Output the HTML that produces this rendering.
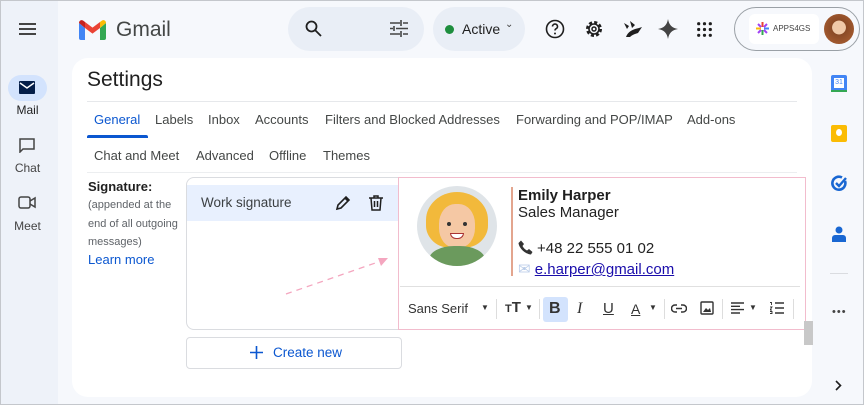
<!DOCTYPE html>
<html><head><meta charset="utf-8"><style>
*{box-sizing:border-box;margin:0;padding:0}
body{width:864px;height:405px;overflow:hidden;background:#f6f8fc;font-family:"Liberation Sans",Arial,sans-serif;color:#1f1f1f;position:relative}
.frame{position:absolute;inset:0;border:1px solid #c4c7cc;pointer-events:none;z-index:9}
.rail{position:absolute;left:0;top:0;width:58px;height:405px;background:#eef2f9}
.abs{position:absolute}
.tab{position:absolute;top:112px;font-size:13px;color:#444746;white-space:nowrap}
.tab2{position:absolute;top:148px;font-size:13px;color:#444746;white-space:nowrap}
.card{position:absolute;left:72px;top:58px;width:740px;height:339px;background:#fff;border-radius:16px}
</style></head><body>
<div class="rail"></div>
<div class="abs" style="left:19px;top:23px;width:17px;height:2px;background:#444;box-shadow:0 5px 0 #444,0 10px 0 #444"></div>
<div class="abs" style="left:8px;top:75px;width:39px;height:26px;border-radius:13px;background:#d3e3fd"></div>
<svg class="abs" style="left:19px;top:81px" width="16" height="13" viewBox="0 0 16 13"><rect width="16" height="13" rx="1" fill="#041e49"/><path d="M1 2l7 5 7-5" stroke="#fff" stroke-width="1.5" fill="none"/></svg>
<div class="abs" style="left:0;width:55px;top:103px;font-size:12px;text-align:center;color:#1f1f1f">Mail</div>
<svg class="abs" style="left:19px;top:138px" width="16" height="15" viewBox="0 0 16 15"><path d="M1 1h14v10H4l-3 3z" stroke="#444" stroke-width="1.5" fill="none"/></svg>
<div class="abs" style="left:0;width:55px;top:161px;font-size:12px;text-align:center;color:#444">Chat</div>
<svg class="abs" style="left:18px;top:196px" width="18" height="13" viewBox="0 0 18 13"><rect x="1" y="1" width="11" height="11" rx="2" stroke="#444" stroke-width="1.5" fill="none"/><path d="M12 5l5-3v9l-5-3" stroke="#444" stroke-width="1.5" fill="none"/></svg>
<div class="abs" style="left:0;width:55px;top:219px;font-size:12px;text-align:center;color:#444">Meet</div>

<svg class="abs" style="left:79px;top:20px" width="27" height="20" viewBox="0 0 27 20"><path d="M0 3v15a2 2 0 0 0 2 2h4V8z" fill="#4285f4"/><path d="M27 3v15a2 2 0 0 1-2 2h-4V8z" fill="#34a853"/><path d="M21 8v-6l2-1.5c1.5-1 4 0 4 2.5z" fill="#fbbc04"/><path d="M6 8V2l7.5 5.6L21 2v6l-7.5 5.6z" fill="#ea4335"/><path d="M0 3c0-2.5 2.5-3.5 4-2.5L6 2v6z" fill="#c5221f"/></svg>
<div class="abs" style="left:116px;top:18px;font-size:21px;color:#444746">Gmail</div>

<div class="abs" style="left:288px;top:7px;width:136px;height:44px;border-radius:22px;background:#e9eef6"></div>
<svg class="abs" style="left:305px;top:20px" width="17" height="17" viewBox="0 0 17 17"><circle cx="6.5" cy="6.5" r="5" stroke="#1f1f1f" stroke-width="1.8" fill="none"/><path d="M10 10l6 6" stroke="#1f1f1f" stroke-width="1.8"/></svg>
<svg class="abs" style="left:390px;top:20px" width="18" height="17" viewBox="0 0 18 17" stroke="#444" stroke-width="1.6"><path d="M0 3h10M13 3h5M11 0v6M0 8.5h3M6 8.5h12M4 6v5M0 14h10M13 14h5M11 11v6"/></svg>

<div class="abs" style="left:433px;top:7px;width:92px;height:44px;border-radius:22px;background:#e9eef6"></div>
<div class="abs" style="left:445px;top:25px;width:9px;height:9px;border-radius:50%;background:#1e8e3e"></div>
<div class="abs" style="left:462px;top:21px;font-size:14px;color:#1f1f1f">Active</div>
<div class="abs" style="left:505px;top:19px;font-size:10px;color:#444">⌄</div>

<svg class="abs" style="left:545px;top:19px" width="20" height="20" viewBox="0 0 20 20"><circle cx="10" cy="10" r="8.5" stroke="#1f1f1f" stroke-width="1.6" fill="none"/><path d="M7.5 7.5a2.5 2.5 0 1 1 3.5 2.3c-.8.4-1 .9-1 1.7" stroke="#1f1f1f" stroke-width="1.6" fill="none"/><circle cx="10" cy="14.5" r="1" fill="#1f1f1f"/></svg>
<svg class="abs" style="left:584px;top:19px" width="20" height="20" viewBox="0 0 20 20"><circle cx="10" cy="10" r="6.5" stroke="#1f1f1f" stroke-width="3" stroke-dasharray="3 2.1" fill="none"/><circle cx="10" cy="10" r="5" stroke="#1f1f1f" stroke-width="1.6" fill="none"/><circle cx="10" cy="10" r="2" stroke="#1f1f1f" stroke-width="1.5" fill="none"/></svg>
<svg class="abs" style="left:623px;top:20px" width="20" height="18" viewBox="0 0 20 18"><path d="M1 3l5 3-2 3zM7 1l5 4-3 3zM3 17c2-6 8-8 13-9l3-1-4 6c-3 1-6 2-8 4z" fill="#1f1f1f"/></svg>
<svg class="abs" style="left:658px;top:19px" width="20" height="20" viewBox="0 0 20 20"><path d="M10 0C11 6 14 9 20 10 14 11 11 14 10 20 9 14 6 11 0 10 6 9 9 6 10 0z" fill="#444"/></svg>
<svg class="abs" style="left:697px;top:22px" width="15" height="15" viewBox="0 0 15 15" fill="#1f1f1f"><circle cx="1.7" cy="1.7" r="1.6"/><circle cx="7.5" cy="1.7" r="1.6"/><circle cx="13.3" cy="1.7" r="1.6"/><circle cx="1.7" cy="7.5" r="1.6"/><circle cx="7.5" cy="7.5" r="1.6"/><circle cx="13.3" cy="7.5" r="1.6"/><circle cx="1.7" cy="13.3" r="1.6"/><circle cx="7.5" cy="13.3" r="1.6"/><circle cx="13.3" cy="13.3" r="1.6"/></svg>

<div class="abs" style="left:734px;top:7px;width:126px;height:44px;border-radius:22px;border:1px solid #9aa0a6;background:#f6f8fc"></div>
<div class="abs" style="left:749px;top:14px;width:70px;height:30px;border-radius:6px;background:#fff"></div>
<svg class="abs" style="left:756px;top:22px" width="13" height="13" viewBox="0 0 13 13" stroke-width="2"><path d="M6.5 0v5" stroke="#ea4335"/><path d="M13 6.5H8" stroke="#4285f4"/><path d="M6.5 13V8" stroke="#34a853"/><path d="M0 6.5h5" stroke="#fbbc04"/><path d="M2 2l3 3M11 2L8 5M11 11L8 8M2 11l3-3" stroke="#a142f4"/></svg>
<div class="abs" style="left:773px;top:24px;font-size:8px;color:#444">APPS4GS</div>
<div class="abs" style="left:824px;top:14px;width:30px;height:30px;border-radius:50%;background:radial-gradient(circle at 50% 45%,#f0c9a8 0 30%,#8a4a26 32%,#a0582e 70%,#5c2e16)"></div>

<div class="abs" style="left:831px;top:75px;width:16px;height:17px;border-radius:2px;background:#4285f4"></div>
<div class="abs" style="left:834px;top:78px;width:10px;height:10px;background:#fff;font-size:7px;color:#4285f4;text-align:center;line-height:10px">31</div>
<div class="abs" style="left:831px;top:90px;width:16px;height:2px;background:#34a853"></div>
<div class="abs" style="left:831px;top:125px;width:16px;height:17px;border-radius:2px;background:#fbbc04"></div>
<div class="abs" style="left:836px;top:129px;width:6px;height:7px;border-radius:50%;background:#fff"></div>
<svg class="abs" style="left:831px;top:175px" width="17" height="17" viewBox="0 0 17 17"><path d="M14 6A6.5 6.5 0 1 1 11 2.5" stroke="#1967d2" stroke-width="2.6" fill="none"/><path d="M5 8l3 3 7-8" stroke="#1967d2" stroke-width="2.4" fill="none"/></svg>
<svg class="abs" style="left:832px;top:226px" width="14" height="16" viewBox="0 0 14 16" fill="#1967d2"><circle cx="7" cy="4" r="3.5"/><path d="M0 16v-4a3 3 0 0 1 3-3h8a3 3 0 0 1 3 3v4z"/></svg>
<div class="abs" style="left:830px;top:273px;width:18px;height:1px;background:#dadce0"></div>
<div class="abs" style="left:832px;top:306px;font-size:11px;color:#444;letter-spacing:1px">•••</div>
<svg class="abs" style="left:835px;top:380px" width="7" height="11" viewBox="0 0 7 11"><path d="M1 1l4.5 4.5L1 10" stroke="#1f1f1f" stroke-width="1.6" fill="none"/></svg>

<div class="card"></div>
<div class="abs" style="left:87px;top:68px;font-size:21px;color:#1f1f1f">Settings</div>
<div class="abs" style="left:87px;top:101px;width:710px;height:1px;background:#e6e8eb"></div>
<div class="tab" style="left:94px;color:#0b57d0">General</div>
<div class="abs" style="left:87px;top:135px;width:61px;height:3px;background:#0b57d0;border-radius:2px 2px 0 0"></div>
<div class="tab" style="left:155px">Labels</div>
<div class="tab" style="left:208px">Inbox</div>
<div class="tab" style="left:255px">Accounts</div>
<div class="tab" style="left:325px">Filters and Blocked Addresses</div>
<div class="tab" style="left:516px">Forwarding and POP/IMAP</div>
<div class="tab" style="left:687px">Add-ons</div>
<div class="tab2" style="left:94px">Chat and Meet</div>
<div class="tab2" style="left:196px">Advanced</div>
<div class="tab2" style="left:269px">Offline</div>
<div class="tab2" style="left:323px">Themes</div>
<div class="abs" style="left:87px;top:172px;width:710px;height:1px;background:#eceef0"></div>

<div class="abs" style="left:88px;top:179px;font-size:13px;font-weight:bold;color:#1f1f1f">Signature:</div>
<div class="abs" style="left:88px;top:196px;font-size:11px;line-height:18.5px;color:#5f6368;width:95px">(appended at the end of all outgoing messages)</div>
<div class="abs" style="left:88px;top:252px;font-size:13px;color:#0b57d0">Learn more</div>

<div class="abs" style="left:186px;top:177px;width:220px;height:153px;border:1px solid #dadce0;border-radius:8px"></div>
<div class="abs" style="left:187px;top:185px;width:212px;height:36px;background:#e8f0fe"></div>
<div class="abs" style="left:201px;top:195px;font-size:13.5px;color:#3c4043">Work signature</div>
<svg class="abs" style="left:335px;top:195px" width="16" height="16" viewBox="0 0 16 16"><path d="M2 14l1-4 8-8 3 3-8 8z M10 3l3 3" stroke="#1f1f1f" stroke-width="1.6" fill="none"/></svg>
<svg class="abs" style="left:369px;top:195px" width="14" height="16" viewBox="0 0 14 16"><path d="M0 3h14M5 3V1h4v2M2 3l1 12h8l1-12M5.5 6v6M8.5 6v6" stroke="#1f1f1f" stroke-width="1.5" fill="none"/></svg>
<svg class="abs" style="left:284px;top:254px" width="108" height="42" viewBox="0 0 108 42"><path d="M2 40L100 6" stroke="#f4a6bf" stroke-width="1.3" stroke-dasharray="6 5"/><path d="M94 4l10 0-7 8z" fill="#f4a6bf"/></svg>

<div class="abs" style="left:398px;top:177px;width:408px;height:153px;border:1.5px solid #f2bccd;background:#fff"></div>
<div class="abs" style="left:417px;top:186px;width:80px;height:80px;border-radius:50%;background:#dfe4e8;overflow:hidden">
<div class="abs" style="left:9px;top:6px;width:62px;height:56px;border-radius:50% 50% 40% 40%;background:#f2b93b"></div>
<div class="abs" style="left:22px;top:18px;width:36px;height:44px;border-radius:45%;background:#f5c8a4"></div>
<div class="abs" style="left:12px;top:60px;width:56px;height:30px;border-radius:45% 45% 0 0;background:#6b9a5d"></div>
<div class="abs" style="left:30px;top:36px;width:4px;height:4px;border-radius:50%;background:#333"></div>
<div class="abs" style="left:46px;top:36px;width:4px;height:4px;border-radius:50%;background:#333"></div>
<div class="abs" style="left:33px;top:47px;width:14px;height:6px;border-radius:0 0 7px 7px;background:#fff;border:1px solid #a33"></div>
</div>
<div class="abs" style="left:511px;top:187px;width:1.5px;height:89px;background:#e3a58e"></div>
<div class="abs" style="left:518px;top:187px;font-size:15px;font-weight:bold;color:#1f1f1f">Emily Harper</div>
<div class="abs" style="left:518px;top:204px;font-size:15px;color:#222">Sales Manager</div>
<svg class="abs" style="left:518px;top:240px" width="15" height="15" viewBox="0 0 15 15"><path d="M3 0.5l3 3.5-1.5 2c1 2 2.5 3.5 4.5 4.5l2-1.5 3.5 3-1.5 2.5C7 14 1 8 0.5 3z" fill="#333"/></svg>
<div class="abs" style="left:537px;top:240px;font-size:15px;color:#222">+48 22 555 01 02</div>
<div class="abs" style="left:518px;top:260px;font-size:15px;color:#222"><span style="color:#b8cbe8">✉</span> <span style="color:#1a0dab;text-decoration:underline">e.harper@gmail.com</span></div>
<div class="abs" style="left:400px;top:286px;width:400px;height:1px;background:#e0e0e0"></div>

<div class="abs" style="left:408px;top:301px;font-size:13px;color:#333">Sans Serif</div>
<div class="abs" style="left:481px;top:303px;font-size:8px;color:#333">▼</div>
<div class="abs" style="left:496px;top:299px;width:1px;height:20px;background:#ddd"></div>
<div class="abs" style="left:505px;top:299px;font-size:15px;font-weight:bold;color:#333"><span style="font-size:11px">T</span>T</div>
<div class="abs" style="left:525px;top:303px;font-size:8px;color:#333">▼</div>
<div class="abs" style="left:539px;top:299px;width:1px;height:20px;background:#ddd"></div>
<div class="abs" style="left:543px;top:297px;width:25px;height:25px;border-radius:3px;background:#d3e3fd"></div>
<div class="abs" style="left:549px;top:300px;font-size:16px;font-weight:bold;color:#333">B</div>
<div class="abs" style="left:577px;top:300px;font-size:16px;font-style:italic;font-family:'Liberation Serif',serif;color:#333">I</div>
<div class="abs" style="left:603px;top:300px;font-size:15px;text-decoration:underline;color:#333">U</div>
<div class="abs" style="left:631px;top:301px;font-size:14px;text-decoration:underline;color:#333">A</div>
<div class="abs" style="left:649px;top:303px;font-size:8px;color:#333">▼</div>
<div class="abs" style="left:664px;top:299px;width:1px;height:20px;background:#ddd"></div>
<svg class="abs" style="left:671px;top:304px" width="16" height="9" viewBox="0 0 16 9"><path d="M6 1H4a3.5 3.5 0 0 0 0 7h2M10 1h2a3.5 3.5 0 0 1 0 7h-2M5 4.5h6" stroke="#333" stroke-width="1.5" fill="none"/></svg>
<svg class="abs" style="left:700px;top:301px" width="14" height="14" viewBox="0 0 14 14"><rect x="1" y="1" width="12" height="12" rx="1" stroke="#333" stroke-width="1.4" fill="none"/><path d="M3 11l3-4 2 2 2-2 1 4z" fill="#333"/></svg>
<div class="abs" style="left:722px;top:299px;width:1px;height:20px;background:#ddd"></div>
<svg class="abs" style="left:731px;top:302px" width="13" height="12" viewBox="0 0 13 12" stroke="#333" stroke-width="1.4"><path d="M0 1h13M0 4.3h9M0 7.6h13M0 11h9"/></svg>
<div class="abs" style="left:749px;top:303px;font-size:8px;color:#333">▼</div>
<svg class="abs" style="left:770px;top:302px" width="14" height="12" viewBox="0 0 14 12" stroke="#333" stroke-width="1.4"><path d="M5 1h9M5 6h9M5 11h9"/><path d="M0 0.5h1.5v2.5M0 5h2L0 8h2M0 9.5h2v2H0" stroke-width="0.9" fill="none"/></svg>
<div class="abs" style="left:793px;top:299px;width:1px;height:20px;background:#ddd"></div>
<div class="abs" style="left:804px;top:321px;width:9px;height:24px;background:#c8c8c8"></div>

<div class="abs" style="left:186px;top:337px;width:216px;height:32px;border:1px solid #dadce0;border-radius:4px"></div>
<svg class="abs" style="left:250px;top:346px" width="13" height="13" viewBox="0 0 13 13"><path d="M6.5 0v13M0 6.5h13" stroke="#0b57d0" stroke-width="1.6"/></svg>
<div class="abs" style="left:273px;top:345px;font-size:13.5px;color:#0b57d0">Create new</div>
<div class="frame"></div>
</body></html>
